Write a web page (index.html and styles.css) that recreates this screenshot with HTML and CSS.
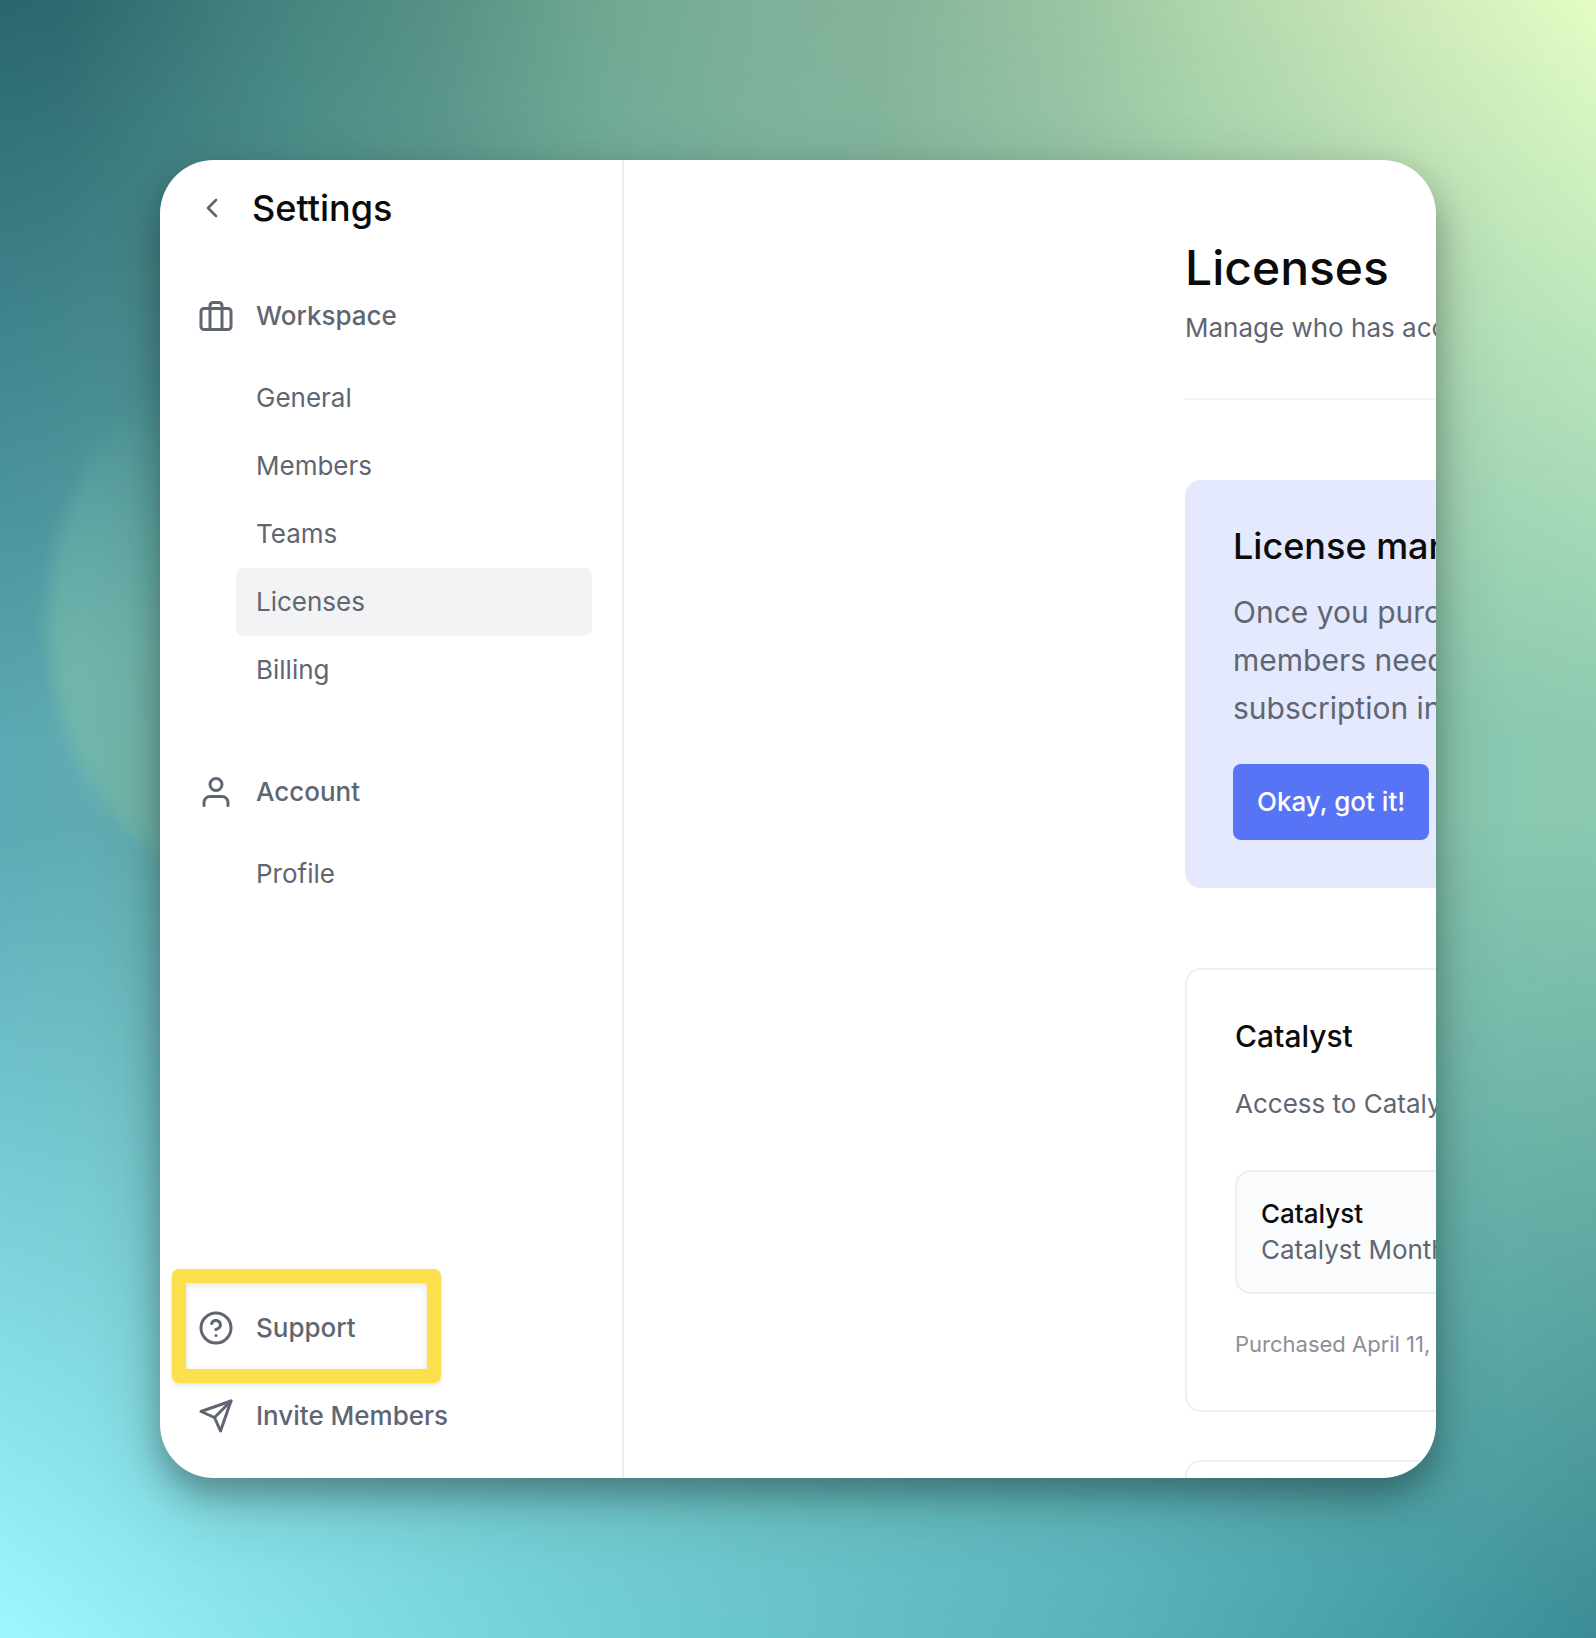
FILE: index.html
```html
<!DOCTYPE html>
<html lang="en">
<head>
    <meta charset="UTF-8">
    <meta name="viewport" content="width=device-width, initial-scale=1.0">
    <title>Settings - Licenses</title>
    <link rel="stylesheet" href="styles.css">
</head>
<body>
    <div class="backdrop">
        <div class="backdrop-top"></div>
        <div class="backdrop-bottom"></div>
        <div class="backdrop-blob"></div>
    </div>

    <div class="window">
        <aside class="sidebar">
            <div class="sidebar-header">
                <button type="button" class="back-button" aria-label="Back">
                    <svg class="icon-back" viewBox="0 0 24 24"><polyline points="15 18 9 12 15 6"/></svg>
                </button>
                <h2 class="sidebar-title">Settings</h2>
            </div>

            <nav class="nav">
                <div class="nav-group">
                    <div class="nav-heading">
                        <svg class="icon" viewBox="0 0 24 24"><rect x="2" y="7" width="20" height="14" rx="2"/><path d="M16 21V5a2 2 0 0 0-2-2h-4a2 2 0 0 0-2 2v16"/></svg>
                        <span>Workspace</span>
                    </div>
                    <ul class="nav-list">
                        <li><a href="#" class="nav-link">General</a></li>
                        <li><a href="#" class="nav-link">Members</a></li>
                        <li><a href="#" class="nav-link">Teams</a></li>
                        <li><a href="#" class="nav-link active">Licenses</a></li>
                        <li><a href="#" class="nav-link">Billing</a></li>
                    </ul>
                </div>
                <div class="nav-group">
                    <div class="nav-heading">
                        <svg class="icon" viewBox="0 0 24 24"><path d="M20 21v-2a4 4 0 0 0-4-4H8a4 4 0 0 0-4 4v2"/><circle cx="12" cy="7" r="4"/></svg>
                        <span>Account</span>
                    </div>
                    <ul class="nav-list">
                        <li><a href="#" class="nav-link">Profile</a></li>
                    </ul>
                </div>
            </nav>

            <div class="sidebar-footer">
                <a href="#" class="nav-heading">
                    <svg class="icon" viewBox="0 0 24 24"><circle cx="12" cy="12" r="10"/><path d="M9.09 9a3 3 0 0 1 5.83 1c0 2-3 3-3 3"/><line x1="12" y1="17" x2="12.01" y2="17"/></svg>
                    <span>Support</span>
                    <span class="highlight"></span>
                </a>
                <a href="#" class="nav-heading">
                    <svg class="icon" viewBox="0 0 24 24"><line x1="22" y1="2" x2="11" y2="13"/><polygon points="22 2 15 22 11 13 2 9 22 2"/></svg>
                    <span>Invite Members</span>
                </a>
            </div>
        </aside>

        <main class="main">
            <div class="content">
                <header class="page-header">
                    <h1 class="page-title">Licenses</h1>
                    <p class="page-subtitle">Manage who has access</p>
                </header>

                <section class="notice">
                    <h2 class="notice-title">License management</h2>
                    <p class="notice-text">Once you purchase<br>members need<br>subscription in</p>
                    <button type="button" class="button">Okay, got it!</button>
                </section>

                <section class="card">
                    <h3 class="card-title">Catalyst</h3>
                    <p class="card-text">Access to Catalyst</p>
                    <div class="plan">
                        <div class="plan-name">Catalyst</div>
                        <div class="plan-period">Catalyst Monthly</div>
                    </div>
                    <p class="card-meta">Purchased April 11,</p>
                </section>

                <section class="card"></section>
            </div>
        </main>
    </div>
</body>
</html>
```

FILE: styles.css
```css
* {
    box-sizing: border-box;
}
body {
    margin: 0;
    padding: 160px;
    height: 100vh;
    overflow: hidden;
    font-family: Inter, "Liberation Sans", sans-serif;
    font-size: 26px;
    line-height: 36px;
    color: #5f6672;
}
h1, h2, h3, p, ul {
    margin: 0;
    padding: 0;
    font-weight: 400;
}
a {
    color: inherit;
    text-decoration: none;
}
ul {
    list-style: none;
}

/* Backdrop: three horizontal gradients blended from top to bottom */
.backdrop,
.backdrop-top,
.backdrop-bottom {
    position: absolute;
    inset: 0;
    overflow: hidden;
}
.backdrop {
    z-index: -1;
    background: linear-gradient(90deg, #5ba9b3 0%, #62adb0 10%, #7cbcaa 50%, #8bcab1 100%);
}
.backdrop-blob {
    position: absolute;
    left: 3%;
    top: 22%;
    width: 26%;
    height: 32%;
    border-radius: 50%;
    background: linear-gradient(180deg, transparent 5%, #74b8aa 60%);
    filter: blur(8px);
    opacity: 0.85;
}
.backdrop-top {
    background: linear-gradient(90deg, #2a666e 0%, #2c686e 4%, #468680 19%, #559084 27%, #6fa891 38%, #7fb09a 48%, #84b299 55%, #9ac4a2 67%, #aed5aa 75%, #bfdfb3 82%, #d0ebba 89%, #e4fdc4 100%);
    mask-image: linear-gradient(180deg, #000 0%, transparent 45%);
}
.backdrop-bottom {
    background: linear-gradient(90deg, #9df8ff 0%, #8ae5ec 15%, #75d3da 32%, #67c2ca 50%, #57b2bc 70%, #469fa9 86%, #3b8c95 100%);
    mask-image: linear-gradient(180deg, transparent 50%, #000 100%);
}

.window {
    display: flex;
    height: 100%;
    overflow: hidden;
    background: #fff;
    border-radius: 54px;
    box-shadow: 0 16px 32px rgba(0, 0, 0, 0.28), 0 24px 72px rgba(0, 0, 0, 0.16);
}

/* Sidebar */
.sidebar {
    display: flex;
    flex-direction: column;
    flex: 0 0 464px;
    padding: 14px 30px 28px 38px;
    border-right: 2px solid #eeeeef;
}
.sidebar-header {
    display: flex;
    align-items: center;
    height: 68px;
    margin: 0 0 40px -2px;
}
.back-button {
    display: flex;
    padding: 0;
    margin-right: 24px;
    border: 0;
    background: none;
    color: inherit;
    cursor: pointer;
}
.sidebar-title {
    font-size: 36px;
    font-weight: 500;
    color: #0b0b0c;
}
.icon,
.icon-back {
    width: 36px;
    height: 36px;
    fill: none;
    stroke: currentColor;
    stroke-width: 2;
    stroke-linecap: round;
    stroke-linejoin: round;
}
.icon-back {
    width: 32px;
    height: 32px;
}
.nav {
    display: flex;
    flex-direction: column;
    gap: 54px;
}
.nav-heading {
    position: relative;
    display: flex;
    align-items: center;
    gap: 22px;
    height: 68px;
    font-weight: 500;
}
.nav-list {
    margin: 14px 0 0 38px;
}
.nav-link {
    display: block;
    padding: 16px 20px;
    border-radius: 8px;
}
.nav-link.active {
    background: #f1f3f5;
}
.sidebar-footer {
    display: flex;
    flex-direction: column;
    gap: 20px;
    margin-top: auto;
}
.highlight {
    position: absolute;
    top: -25px;
    left: -26px;
    width: 269px;
    height: 114px;
    border: 14px solid #fce04b;
    border-radius: 7px;
    box-shadow: 0 2px 4px rgba(0, 0, 0, 0.12), inset 0 2px 6px rgba(0, 0, 0, 0.12);
}

/* Main column */
.main {
    flex: 1;
    min-width: 0;
    overflow: hidden;
    padding: 80px 0 0 561px;
}
.content {
    width: 960px;
}
.page-header {
    padding-bottom: 52px;
    margin-bottom: 80px;
    border-bottom: 2px solid #f3f3f4;
}
.page-title {
    margin-bottom: 14px;
    font-size: 48px;
    font-weight: 500;
    line-height: 56px;
    color: #0b0b0c;
}
.page-subtitle {
    line-height: 36px;
}
.notice {
    padding: 48px;
    margin-bottom: 80px;
    border-radius: 16px;
    background: #e4e9fd;
}
.notice-title {
    margin-bottom: 24px;
    font-size: 36px;
    font-weight: 500;
    color: #0b0b0c;
}
.notice-text {
    margin-bottom: 32px;
    font-size: 30px;
    line-height: 48px;
}
.button {
    display: block;
    padding: 20px 24px;
    border: 0;
    border-radius: 8px;
    background: #5774f7;
    color: #fff;
    font: inherit;
    font-weight: 500;
    cursor: pointer;
}
.card {
    min-height: 200px;
    padding: 48px;
    margin-bottom: 48px;
    border: 2px solid #eeeff0;
    border-radius: 16px;
}
.card-title {
    margin-bottom: 32px;
    font-size: 30px;
    font-weight: 500;
    color: #0b0b0c;
}
.card-text {
    margin-bottom: 48px;
}
.plan {
    padding: 24px;
    margin-bottom: 32px;
    border: 2px solid #eeeff0;
    border-radius: 16px;
    background: #fafbfd;
}
.plan-name {
    font-weight: 500;
    color: #0b0b0c;
}
.card-meta {
    font-size: 22px;
    color: #8b909a;
}
```
